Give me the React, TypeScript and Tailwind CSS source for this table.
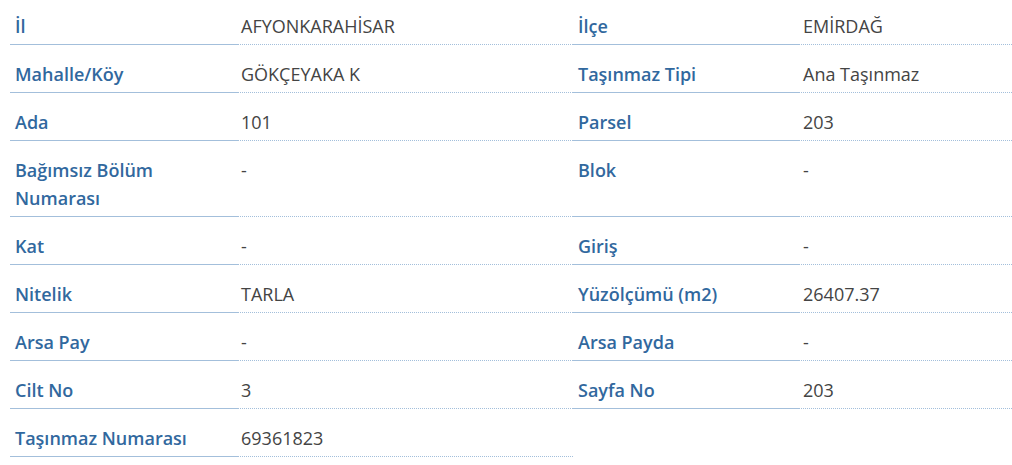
import React from "react";

const rows: [string, string, string?, string?][] = [
  ["İl", "AFYONKARAHİSAR", "İlçe", "EMİRDAĞ"],
  ["Mahalle/Köy", "GÖKÇEYAKA K", "Taşınmaz Tipi", "Ana Taşınmaz"],
  ["Ada", "101", "Parsel", "203"],
  ["Bağımsız Bölüm Numarası", "-", "Blok", "-"],
  ["Kat", "-", "Giriş", "-"],
  ["Nitelik", "TARLA", "Yüzölçümü (m2)", "26407.37"],
  ["Arsa Pay", "-", "Arsa Payda", "-"],
  ["Cilt No", "3", "Sayfa No", "203"],
  ["Taşınmaz Numarası", "69361823"],
];

function Label({ text }: { text: string }) {
  return (
    <div className="border-b border-solid border-[#a3bfdb] pt-[15px] pb-[4px] px-[5px] text-[18px] leading-[28px] font-semibold text-[#31689e]">
      {text}
    </div>
  );
}

function Value({ text }: { text: string }) {
  return (
    <div className="border-b border-dotted border-[#a3bfdb] pt-[15px] pb-[4px] pl-[4px] pr-[5px] text-[18px] leading-[28px] text-[#444444]">
      {text}
    </div>
  );
}

export default function App() {
  return (
    <div
      className="w-[1012px] h-[465px] overflow-hidden bg-white"
      style={{ fontFamily: '"Open Sans", "Noto Sans", sans-serif' }}
    >
      <div className="-mt-[3px] ml-[10px] grid grid-cols-[227px_336px_226px_213px]">
        {rows.map((r, i) => (
          <React.Fragment key={i}>
            <Label text={r[0]} />
            <Value text={r[1]} />
            {r[2] !== undefined && <Label text={r[2]} />}
            {r[3] !== undefined && <Value text={r[3]} />}
          </React.Fragment>
        ))}
      </div>
    </div>
  );
}
